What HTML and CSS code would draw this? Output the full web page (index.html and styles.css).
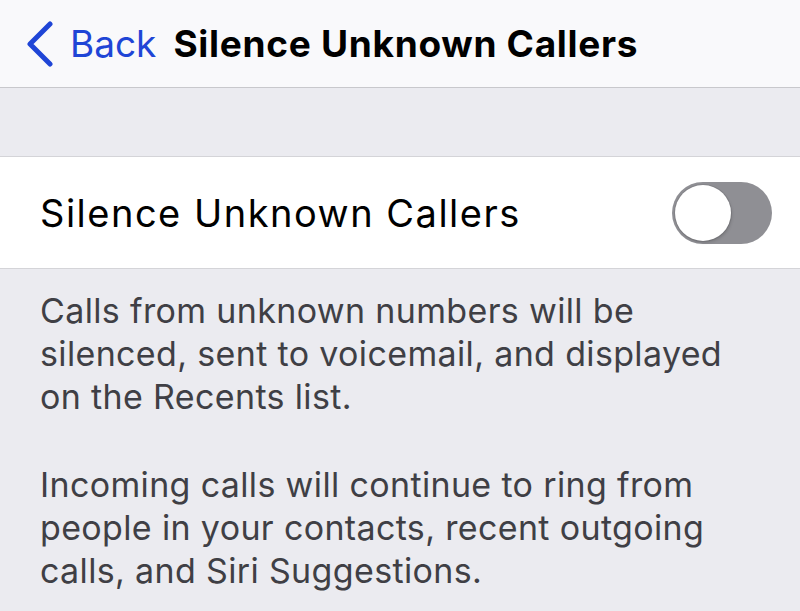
FILE: index.html
```html
<!DOCTYPE html>
<html lang="en">
<head>
    <meta charset="UTF-8">
    <meta name="viewport" content="width=device-width, initial-scale=1.0">
    <title>Silence Unknown Callers</title>
    <link rel="stylesheet" href="styles.css">
</head>
<body>
    <div class="nav">
        <a class="back" href="#">
            <svg class="chevron" width="30" height="46" viewBox="0 0 30 46">
                <path d="M25 3 L5 23 L25 43" fill="none" stroke="#1f45d6" stroke-width="5" stroke-linecap="round" stroke-linejoin="round"/>
            </svg>
            <span>Back</span>
        </a>
        <div class="title">Silence Unknown Callers</div>
    </div>

    <div class="band"></div>

    <div class="group">
        <div class="row">
            <span class="label">Silence Unknown Callers</span>
            <div class="toggle">
                <div class="thumb"></div>
            </div>
        </div>
    </div>

    <div class="footer">
        <p>Calls from unknown numbers will be silenced, sent to voicemail, and displayed on the Recents list.</p>
        <p>Incoming calls will continue to ring from people in your contacts, recent outgoing calls, and Siri Suggestions.</p>
    </div>
</body>
</html>
```

FILE: styles.css
```css
body {
    margin: 0;
    font-family: Inter, "Noto Sans", sans-serif;
    background: #ebebf0;
    height: 611px;
    overflow: hidden;
}

.nav {
    display: flex;
    align-items: center;
    height: 88px;
    padding-left: 25px;
    background: #f9f9fb;
    border-bottom: 1px solid #c8c8cc;
    box-sizing: border-box;
}

.back {
    display: flex;
    align-items: center;
    color: #1f45d6;
    text-decoration: none;
    font-size: 37px;
    margin-right: 17px;
}

.chevron {
    margin-right: 15px;
}

.title {
    font-size: 37px;
    font-weight: 700;
    color: #000;
    letter-spacing: 0.7px;
}

.band {
    height: 68px;
}

.group {
    background: #fff;
    border-top: 1px solid #d4d4d8;
    border-bottom: 1px solid #d4d4d8;
}

.row {
    display: flex;
    align-items: center;
    justify-content: space-between;
    height: 111px;
    padding: 0 28px 0 40px;
}

.label {
    font-size: 38px;
    color: #000;
    letter-spacing: 1.5px;
}

.toggle {
    width: 100px;
    height: 62px;
    border-radius: 31px;
    background: #8f8f94;
    display: flex;
    align-items: center;
    padding-left: 3px;
    box-sizing: border-box;
}

.thumb {
    width: 56px;
    height: 56px;
    border-radius: 50%;
    background: #fff;
    box-shadow: 0 0 0 1px rgba(0, 0, 0, 0.08), 1px 2px 3px rgba(0, 0, 0, 0.15);
}

.footer {
    padding: 20px 60px 0 40px;
    color: #3f3f45;
    font-size: 34px;
    line-height: 43px;
    letter-spacing: 0.35px;
}

.footer p {
    margin: 0 0 45px;
}
```
